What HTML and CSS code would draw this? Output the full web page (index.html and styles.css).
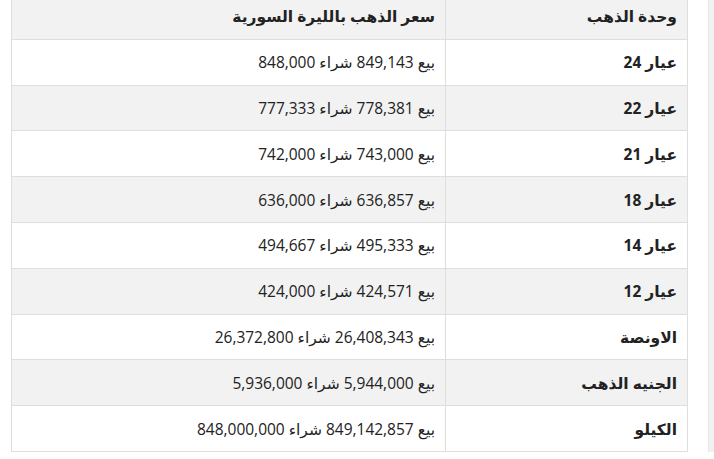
FILE: index.html
```html
<!DOCTYPE html>
<html lang="ar" dir="rtl">
<head>
<meta charset="utf-8">
<link rel="stylesheet" href="styles.css">
</head>
<body>
<div class="page">
  <div class="side"></div>
  <div class="main">
    <table class="prices">
      <thead>
        <tr><th class="unit">وحدة الذهب</th><th class="price">سعر الذهب بالليرة السورية</th></tr>
      </thead>
      <tbody>
        <tr><td class="unit">عيار 24</td><td class="price">بيع 849,143 شراء 848,000</td></tr>
        <tr><td class="unit">عيار 22</td><td class="price">بيع 778,381 شراء 777,333</td></tr>
        <tr><td class="unit">عيار 21</td><td class="price">بيع 743,000 شراء 742,000</td></tr>
        <tr><td class="unit">عيار 18</td><td class="price">بيع 636,857 شراء 636,000</td></tr>
        <tr><td class="unit">عيار 14</td><td class="price">بيع 495,333 شراء 494,667</td></tr>
        <tr><td class="unit">عيار 12</td><td class="price">بيع 424,571 شراء 424,000</td></tr>
        <tr><td class="unit">الاونصة</td><td class="price">بيع 26,408,343 شراء 26,372,800</td></tr>
        <tr><td class="unit">الجنيه الذهب</td><td class="price">بيع 5,944,000 شراء 5,936,000</td></tr>
        <tr><td class="unit">الكيلو</td><td class="price">بيع 849,142,857 شراء 848,000,000</td></tr>
      </tbody>
    </table>
    <div class="mark"></div>
  </div>
</div>
</body>
</html>
```
FILE: styles.css
```css
html, body {
  margin: 0;
  padding: 0;
  background: #fff;
  overflow: hidden;
}
.page {
  display: flex;
  flex-direction: row;
  width: 714px;
  height: 459px;
  font-family: "Open Sans", "DejaVu Sans", sans-serif;
  color: #222;
}
.side {
  width: 5px;
  height: 452px;
  background: #f1f1f1;
  border-left: 1px solid #e6e6e6;
  flex: none;
}
.main {
  width: 698px;
  margin-right: 20px;
  display: flex;
  flex-direction: column;
}
.prices {
  width: 677px;
  margin-top: -7px;
  border-collapse: collapse;
  font-size: 15.5px;
}
.prices th, .prices td {
  border: 1px solid #dedede;
  height: 45.8px;
  padding: 0 10px;
  text-align: right;
  box-sizing: border-box;
}
.prices th {
  background: #f2f2f2;
  font-weight: bold;
}
.prices .unit {
  width: 242px;
  font-weight: bold;
}
.prices .price {
  font-weight: normal;
}
.prices thead .price {
  font-weight: bold;
}
.prices tbody tr:nth-child(even) td {
  background: #f2f2f2;
}
.mark {
  align-self: flex-end;
  width: 4px;
  height: 3px;
  background: #1a1aff;
  margin-top: 5px;
  margin-left: -20px;
}
```
